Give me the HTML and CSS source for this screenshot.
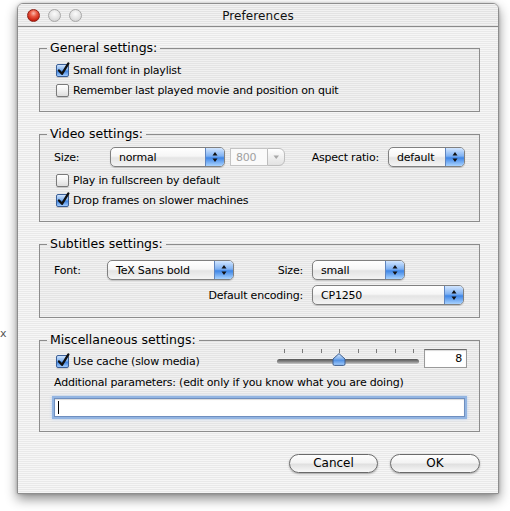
FILE: index.html
```html
<!DOCTYPE html>
<html>
<head>
<meta charset="utf-8">
<link rel="stylesheet" href="styles.css">
</head>
<body>
<span class="desk-glyph">x</span>
<div class="window">
  <div class="titlebar">
    <div class="lights">
      <span class="light close"></span>
      <span class="light"></span>
      <span class="light"></span>
    </div>
    <div class="title">Preferences</div>
    <div></div>
  </div>
  <div class="content">
    <fieldset class="group g1">
      <legend>General settings:</legend>
      <label class="check"><span class="cb on"><svg class="tick" width="14" height="14" viewBox="0 0 14 14"><path d="M3 6.4 L6 9.8 L12.4 -0.6" fill="none" stroke="#101010" stroke-width="2.3" stroke-linecap="round" stroke-linejoin="round"/></svg></span>Small font in playlist</label>
      <label class="check"><span class="cb"></span>Remember last played movie and position on quit</label>
    </fieldset>

    <fieldset class="group g2">
      <legend>Video settings:</legend>
      <div class="vrow">
        <span class="lbl size-lbl">Size:</span>
        <div class="popup w-normal"><span class="val">normal</span><span class="arr"><svg width="18" height="18" viewBox="0 0 18 18"><path d="M9 4 L11.5 7.5 L6.5 7.5 Z M6.5 10.5 L11.5 10.5 L9 14 Z" fill="#111"/></svg></span></div>
        <div class="combo"><span class="cval">800</span><span class="cbtn"><svg width="15" height="16" viewBox="0 0 15 16"><path d="M4.5 6.5 L10 6.5 L7.25 10 Z" fill="#a8a8a8"/></svg></span></div>
        <span class="spacer"></span>
        <span class="lbl">Aspect ratio:</span>
        <div class="popup w-default"><span class="val">default</span><span class="arr"><svg width="18" height="18" viewBox="0 0 18 18"><path d="M9 4 L11.5 7.5 L6.5 7.5 Z M6.5 10.5 L11.5 10.5 L9 14 Z" fill="#111"/></svg></span></div>
      </div>
      <label class="check first"><span class="cb"></span>Play in fullscreen by default</label>
      <label class="check"><span class="cb on"><svg class="tick" width="14" height="14" viewBox="0 0 14 14"><path d="M3 6.4 L6 9.8 L12.4 -0.6" fill="none" stroke="#101010" stroke-width="2.3" stroke-linecap="round" stroke-linejoin="round"/></svg></span>Drop frames on slower machines</label>
    </fieldset>

    <fieldset class="group g3">
      <legend>Subtitles settings:</legend>
      <div class="subgrid">
        <span class="lbl">Font:</span>
        <div class="popup"><span class="val">TeX Sans bold</span><span class="arr"><svg width="18" height="18" viewBox="0 0 18 18"><path d="M9 4 L11.5 7.5 L6.5 7.5 Z M6.5 10.5 L11.5 10.5 L9 14 Z" fill="#111"/></svg></span></div>
        <span class="lbl right">Size:</span>
        <div class="popup w-small"><span class="val">small</span><span class="arr"><svg width="18" height="18" viewBox="0 0 18 18"><path d="M9 4 L11.5 7.5 L6.5 7.5 Z M6.5 10.5 L11.5 10.5 L9 14 Z" fill="#111"/></svg></span></div>
        <span class="lbl right span3">Default encoding:</span>
        <div class="popup"><span class="val">CP1250</span><span class="arr"><svg width="18" height="18" viewBox="0 0 18 18"><path d="M9 4 L11.5 7.5 L6.5 7.5 Z M6.5 10.5 L11.5 10.5 L9 14 Z" fill="#111"/></svg></span></div>
      </div>
    </fieldset>

    <fieldset class="group g4">
      <legend>Miscellaneous settings:</legend>
      <div class="mrow">
        <label class="check cache"><span class="cb on"><svg class="tick" width="14" height="14" viewBox="0 0 14 14"><path d="M3 6.4 L6 9.8 L12.4 -0.6" fill="none" stroke="#101010" stroke-width="2.3" stroke-linecap="round" stroke-linejoin="round"/></svg></span>Use cache (slow media)</label>
        <span class="spacer"></span>
        <div class="slider">
          <div class="ticks"><i></i><i></i><i></i><i></i><i></i><i></i><i></i><i></i></div>
          <div class="track"></div>
          <svg class="thumb" width="14" height="13" viewBox="0 0 14 13">
            <defs>
              <linearGradient id="tg" x1="0" y1="0" x2="0" y2="1">
                <stop offset="0" stop-color="#d6e8ff"/>
                <stop offset="0.45" stop-color="#7fb0ee"/>
                <stop offset="0.55" stop-color="#4f8fe3"/>
                <stop offset="1" stop-color="#a8d0ff"/>
              </linearGradient>
            </defs>
            <path d="M7 0.6 L13 6 L13 11 Q13 12.4 11.6 12.4 L2.4 12.4 Q1 12.4 1 11 L1 6 Z" fill="url(#tg)" stroke="#3e5f8f" stroke-width="1"/>
          </svg>
        </div>
        <div class="numfield">8</div>
      </div>
      <div class="plain">Additional parameters: (edit only if you know what you are doing)</div>
      <div class="textfield"><span class="caret"></span></div>
    </fieldset>

    <div class="buttons">
      <button class="btn cancel">Cancel</button>
      <button class="btn ok">OK</button>
    </div>
  </div>
</div>
</body>
</html>
```
FILE: styles.css
```css
html, body {
  margin: 0;
}
body {
  width: 510px;
  height: 511px;
  overflow: hidden;
  position: relative;
  background: #ffffff;
  padding: 3px 0 0 17px;
  box-sizing: border-box;
  font-family: "DejaVu Sans", "Noto Sans", sans-serif;
  color: #000;
}

.desk-glyph {
  position: absolute;
  left: 0;
  top: 327px;
  font-size: 11px;
  color: #555;
}

.window {
  box-sizing: border-box;
  width: 482px;
  height: 491px;
  border: 1px solid #8e8e8e;
  border-radius: 6px 6px 0 0;
  background: repeating-linear-gradient(to bottom, #f6f6f6 0, #f6f6f6 1px, #e9e9e9 1px, #e9e9e9 2px);
  box-shadow: 0 5px 12px rgba(0, 0, 0, 0.45), 0 0 3px rgba(0, 0, 0, 0.2);
  display: flex;
  flex-direction: column;
}

.titlebar {
  height: 22px;
  border-bottom: 1px solid #8a8a8a;
  border-radius: 5px 5px 0 0;
  display: grid;
  grid-template-columns: 1fr auto 1fr;
  align-items: center;
  background: repeating-linear-gradient(to bottom, #f2f2f2 0, #f2f2f2 1px, #e3e3e3 1px, #e3e3e3 2px);
}

.lights {
  display: flex;
  gap: 8px;
  padding-left: 9px;
  padding-top: 1px;
}
.light {
  box-sizing: border-box;
  width: 13px;
  height: 13px;
  border-radius: 50%;
  border: 1px solid #a8a8a8;
  background: radial-gradient(circle at 50% 35%, #fbfbfb 0, #e2e2e2 55%, #c9c9c9 100%);
}
.light.close {
  border-color: #8e2218;
  background: radial-gradient(circle at 50% 30%, #f9b9ac 0, #ea5a44 35%, #c8200f 75%, #9a1005 100%);
}

.title {
  font-size: 12px;
  letter-spacing: 0.1px;
  color: #111;
  padding-top: 2px;
}

.content {
  padding: 13px 18px 0 21px;
  display: flex;
  flex-direction: column;
  gap: 14px;
  font-size: 11px;
  letter-spacing: -0.2px;
}

.group {
  margin: 0;
  min-width: 0;
  border: 1px solid #8c8c8c;
  padding: 4px 14px 11px 14px;
  background: rgba(0, 0, 0, 0.02);
}
.group legend {
  font-size: 12.5px;
  line-height: 16px;
  letter-spacing: 0;
  padding: 0 3px;
  margin-left: -7px;
}

.check {
  display: flex;
  align-items: center;
  gap: 5px;
  height: 20px;
  padding-left: 2px;
}
.check.first {
  margin-top: 2px;
}

.cb {
  position: relative;
  box-sizing: border-box;
  width: 13px;
  height: 13px;
  margin-right: -1px;
  border: 1px solid #7a7a7a;
  border-radius: 2px;
  background: linear-gradient(to bottom, #ffffff 0, #f1f1f1 50%, #dddddd 100%);
  box-shadow: 0 1px 1px rgba(0, 0, 0, 0.15);
  flex: none;
}
.cb.on {
  border-color: #3b5f97;
  background: linear-gradient(to bottom, #cfe3fc 0, #80b2f0 45%, #3f82de 55%, #9fcbff 100%);
}
.tick {
  position: absolute;
  left: -1px;
  top: -1px;
  overflow: visible;
}

.lbl {
  white-space: nowrap;
}

.vrow {
  display: flex;
  align-items: center;
  height: 22px;
}
.size-lbl {
  width: 56px;
  flex: none;
}
.spacer {
  flex: 1;
}

.popup {
  box-sizing: border-box;
  height: 20px;
  display: flex;
  align-items: stretch;
  border: 1px solid #808080;
  border-radius: 5px;
  background: linear-gradient(to bottom, #ffffff 0, #f6f6f6 45%, #e4e4e4 55%, #f4f4f4 100%);
  box-shadow: 0 1px 1px rgba(0, 0, 0, 0.18);
  overflow: hidden;
}
.popup .val {
  flex: 1;
  padding-left: 8px;
  display: flex;
  align-items: center;
  white-space: nowrap;
}
.popup .arr {
  width: 18px;
  flex: none;
  border-left: 1px solid #5f85bf;
  background: linear-gradient(to bottom, #d2e6ff 0, #7fb1f2 45%, #3f86e6 55%, #a9d3ff 100%);
  display: flex;
  align-items: center;
  justify-content: center;
}
.w-normal { width: 115px; flex: none; }
.w-default { width: 77px; flex: none; margin-left: 9px; }
.w-small { width: 93px; }

.combo {
  box-sizing: border-box;
  width: 55px;
  height: 18px;
  margin-left: 5px;
  display: flex;
  flex: none;
}
.cval {
  flex: 1;
  border: 1px solid #c4c4c4;
  border-right: none;
  background: #fafafa;
  color: #a0a0a0;
  padding-left: 5px;
  display: flex;
  align-items: center;
}
.cbtn {
  width: 16px;
  border: 1px solid #bdbdbd;
  border-radius: 0 6px 6px 0;
  background: linear-gradient(to bottom, #ffffff 0, #f0f0f0 50%, #e2e2e2 100%);
  display: flex;
  align-items: center;
  justify-content: center;
}

.g3 {
  padding-top: 7px;
}
.subgrid {
  display: grid;
  grid-template-columns: 53px 127px 78px 152px;
  grid-auto-rows: 22px;
  row-gap: 3px;
  align-items: center;
}
.subgrid .right {
  text-align: right;
  padding-right: 9px;
}
.subgrid .span3 {
  grid-column: 1 / 4;
}

.g4 {
  padding-top: 1px;
  padding-bottom: 14px;
}
.mrow {
  display: flex;
  align-items: flex-start;
  height: 22px;
}
.check.cache {
  height: 22px;
  margin-top: 1px;
}
.slider {
  position: relative;
  width: 142px;
  height: 17px;
  margin-right: 5px;
  flex: none;
}
.ticks {
  display: flex;
  justify-content: space-between;
  padding: 0 5px 0 7px;
  height: 4px;
}
.ticks i {
  display: block;
  width: 1px;
  height: 4px;
  background: #7a7a7a;
}
.track {
  margin-top: 6px;
  height: 5px;
  border-radius: 3px;
  background: linear-gradient(to bottom, #555555 0, #858585 50%, #c8c8c8 100%);
  box-shadow: 0 1px 0 rgba(255, 255, 255, 0.6);
}
.thumb {
  position: absolute;
  left: 55px;
  top: 4px;
}
.numfield {
  box-sizing: border-box;
  width: 43px;
  height: 19px;
  margin-right: -2px;
  border: 1px solid #9a9a9a;
  border-top-color: #6c6c6c;
  background: #fff;
  box-shadow: inset 0 1px 1px rgba(0, 0, 0, 0.15);
  text-align: right;
  padding-right: 4px;
  line-height: 17px;
  flex: none;
}
.plain {
  margin-top: 2px;
  height: 20px;
  line-height: 20px;
  white-space: nowrap;
}
.textfield {
  box-sizing: border-box;
  margin-top: 5px;
  height: 19px;
  border: 1px solid #6f8fbf;
  background: #fff;
  box-shadow: 0 0 0 2px #93b5e2, 0 0 3px 2px #b7cff0, inset 0 1px 1px rgba(0, 0, 0, 0.15);
  display: flex;
  align-items: center;
}
.caret {
  display: block;
  width: 1px;
  height: 13px;
  margin-left: 3px;
  background: #000;
}

.buttons {
  margin-top: 8px;
  display: flex;
  justify-content: flex-end;
  gap: 12px;
}
.btn {
  box-sizing: border-box;
  height: 19px;
  border: 1px solid #6a6a6a;
  border-radius: 10px;
  background: linear-gradient(to bottom, #fefefe 0, #f3f3f3 45%, #e0e0e0 55%, #f8f8f8 100%);
  box-shadow: 0 1px 2px rgba(0, 0, 0, 0.3);
  font-family: "DejaVu Sans", "Noto Sans", sans-serif;
  font-size: 12px;
  color: #000;
  padding: 0;
  line-height: 17px;
}
.btn.cancel { width: 89px; }
.btn.ok { width: 90px; }
```
